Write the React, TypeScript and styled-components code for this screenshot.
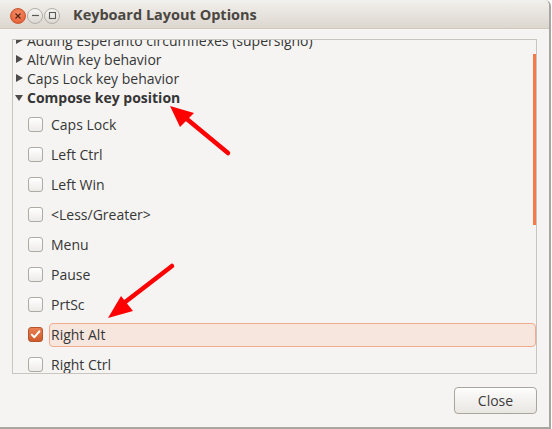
import React from "react";
import styled, { createGlobalStyle } from "styled-components";

const GlobalStyle = createGlobalStyle`
    html, body {
        margin: 0;
        padding: 0;
        background: #ffffff;
    }
    body {
        font-family: "Open Sans", "Noto Sans", "DejaVu Sans", sans-serif;
        color: #363636;
    }
`;

type Option = {
    label: string;
    checked?: boolean;
};

const groups = ["Adding Esperanto circumflexes (supersigno)", "Alt/Win key behavior", "Caps Lock key behavior"];

const options: Option[] = [
    { label: "Caps Lock" },
    { label: "Left Ctrl" },
    { label: "Left Win" },
    { label: "<Less/Greater>" },
    { label: "Menu" },
    { label: "Pause" },
    { label: "PrtSc" },
    { label: "Right Alt", checked: true },
    { label: "Right Ctrl" },
];

const App = () => {
    return (
        <>
            <GlobalStyle />
            <Window>
                <TitleBar>
                    <WindowButtons>
                        <CircleButton $variant="close">
                            <svg width="8" height="8" viewBox="0 0 8 8">
                                <path d="M1.5 1.5 L6.5 6.5 M6.5 1.5 L1.5 6.5" stroke="#5a2410" strokeWidth="1.3" />
                            </svg>
                        </CircleButton>
                        <CircleButton $variant="plain">
                            <svg width="9" height="9" viewBox="0 0 9 9">
                                <path d="M1 4.5 H8" stroke="#5c5a56" strokeWidth="1.2" />
                            </svg>
                        </CircleButton>
                        <CircleButton $variant="plain">
                            <svg width="9" height="9" viewBox="0 0 9 9">
                                <rect x="1.5" y="1.5" width="6" height="6" fill="none" stroke="#5c5a56" strokeWidth="1.1" />
                            </svg>
                        </CircleButton>
                    </WindowButtons>
                    <Title>Keyboard Layout Options</Title>
                </TitleBar>

                <Body>
                    <Frame>
                        {/* list is scrolled down a little, first row is clipped at the top */}
                        <List>
                            {groups.map((g) => (
                                <GroupRow key={g}>
                                    <Expander $open={false} />
                                    <span>{g}</span>
                                </GroupRow>
                            ))}
                            <GroupRow $bold>
                                <Expander $open />
                                <span>Compose key position</span>
                            </GroupRow>
                            <Options>
                                {options.map((o) => (
                                    <OptionRow key={o.label}>
                                        <Checkbox $checked={!!o.checked}>
                                            {o.checked && (
                                                <svg width="11" height="11" viewBox="0 0 11 11">
                                                    <path d="M1.8 5.6 L4.4 8.2 L9.4 2.4" fill="none" stroke="#ffffff" strokeWidth="2" strokeLinecap="round" strokeLinejoin="round" />
                                                </svg>
                                            )}
                                        </Checkbox>
                                        <OptionLabel $selected={!!o.checked}>{o.label}</OptionLabel>
                                    </OptionRow>
                                ))}
                            </Options>
                        </List>
                        <ScrollThumb />
                    </Frame>

                    <Footer>
                        <Button>Close</Button>
                    </Footer>
                </Body>

                {/* red annotation arrows drawn over the screenshot */}
                <Annotations width="552" height="429" viewBox="0 0 552 429">
                    <path d="M228 153 L182 115" stroke="#ff0000" strokeWidth="4.5" strokeLinecap="round" />
                    <polygon points="170,106 194,113 180,127" fill="#ff0000" />
                    <path d="M172 266 L120 306" stroke="#ff0000" strokeWidth="4.5" strokeLinecap="round" />
                    <polygon points="108,318 121,296 133,311" fill="#ff0000" />
                </Annotations>
            </Window>
        </>
    );
};

export default App;

const Window = styled.div`
    position: relative;
    width: 549px;
    height: 427px;
    background: #f5f4f2;
    border-right: 2px solid #aaa59e;
    border-bottom: 2px solid #aaa59e;
    border-top-right-radius: 6px;
    display: flex;
    flex-direction: column;
    overflow: hidden;
`;

const TitleBar = styled.div`
    height: 28px;
    display: flex;
    align-items: center;
    background: linear-gradient(#f2f0ed, #dcd6cf);
    border-bottom: 1px solid #cfc8bf;
    flex-shrink: 0;
`;

const WindowButtons = styled.div`
    display: flex;
    align-items: center;
    gap: 1px;
    padding-left: 10px;
    padding-top: 3px;
`;

const CircleButton = styled.div<{ $variant: "close" | "plain" }>`
    width: 16px;
    height: 16px;
    border-radius: 50%;
    display: flex;
    align-items: center;
    justify-content: center;
    box-sizing: border-box;
    background: ${(p) =>
        p.$variant === "close"
            ? "radial-gradient(circle at 50% 35%, #f7906a, #e0542a)"
            : "linear-gradient(#f8f7f5, #dcd8d3)"};
    border: 1px solid ${(p) => (p.$variant === "close" ? "#c9582f" : "#b3aea7")};
`;

const Title = styled.div`
    margin-left: 13px;
    padding-top: 1px;
    font-size: 14.5px;
    font-weight: bold;
    color: #4a4642;
`;

const Body = styled.div`
    flex: 1;
    display: flex;
    flex-direction: column;
    padding: 10px 12px 0 12px;
`;

const Frame = styled.div`
    position: relative;
    height: 333px;
    border: 1px solid #c9c5bf;
    overflow: hidden;
    background: #f5f4f2;
`;

const List = styled.div`
    margin-top: -9.5px;
    font-size: 14px;
`;

const GroupRow = styled.div<{ $bold?: boolean }>`
    height: 19px;
    display: flex;
    align-items: center;
    gap: 4px;
    padding-left: 3px;
    font-weight: ${(p) => (p.$bold ? "bold" : "normal")};
    white-space: nowrap;
`;

const Expander = styled.span<{ $open: boolean }>`
    width: 0;
    height: 0;
    flex-shrink: 0;
    ${(p) =>
        p.$open
            ? `border-left: 4.5px solid transparent;
               border-right: 4.5px solid transparent;
               border-top: 6px solid #4c4c4c;
               margin: 1px 0 0 -1px;`
            : `border-top: 4px solid transparent;
               border-bottom: 4px solid transparent;
               border-left: 7px solid #4c4c4c;
               margin-left: 0;`}
`;

const Options = styled.div`
    padding-top: 3px;
`;

const OptionRow = styled.div`
    height: 30px;
    display: flex;
    align-items: center;
    padding-left: 15px;
    gap: 6px;
`;

const Checkbox = styled.span<{ $checked: boolean }>`
    width: 15px;
    height: 15px;
    box-sizing: border-box;
    border-radius: 3px;
    flex-shrink: 0;
    display: flex;
    align-items: center;
    justify-content: center;
    border: 1px solid ${(p) => (p.$checked ? "#b4552c" : "#aeaaa4")};
    background: ${(p) => (p.$checked ? "linear-gradient(#e97f52, #cf5a2b)" : "linear-gradient(#ffffff, #edebe8)")};
`;

const OptionLabel = styled.span<{ $selected: boolean }>`
    flex: 1;
    height: 24px;
    box-sizing: border-box;
    display: flex;
    align-items: center;
    padding-left: 1px;
    border-radius: 4px;
    border: 1px solid ${(p) => (p.$selected ? "#f2ab8e" : "transparent")};
    background: ${(p) => (p.$selected ? "#f7e6de" : "transparent")};
`;

const ScrollThumb = styled.div`
    position: absolute;
    right: 0;
    top: 14px;
    width: 3px;
    height: 171px;
    background: #f47b48;
`;

const Footer = styled.div`
    display: flex;
    justify-content: flex-end;
    margin-top: 13px;
`;

const Button = styled.button`
    width: 83px;
    height: 27px;
    font-family: inherit;
    font-size: 14px;
    color: #3c3c3c;
    border: 1px solid #aaa69f;
    border-radius: 4px;
    background: linear-gradient(#fdfdfc, #e9e6e2);
    box-shadow: inset 0 1px 0 #ffffff;
    padding: 0;
`;

const Annotations = styled.svg`
    position: absolute;
    left: 0;
    top: 0;
    pointer-events: none;
`;
